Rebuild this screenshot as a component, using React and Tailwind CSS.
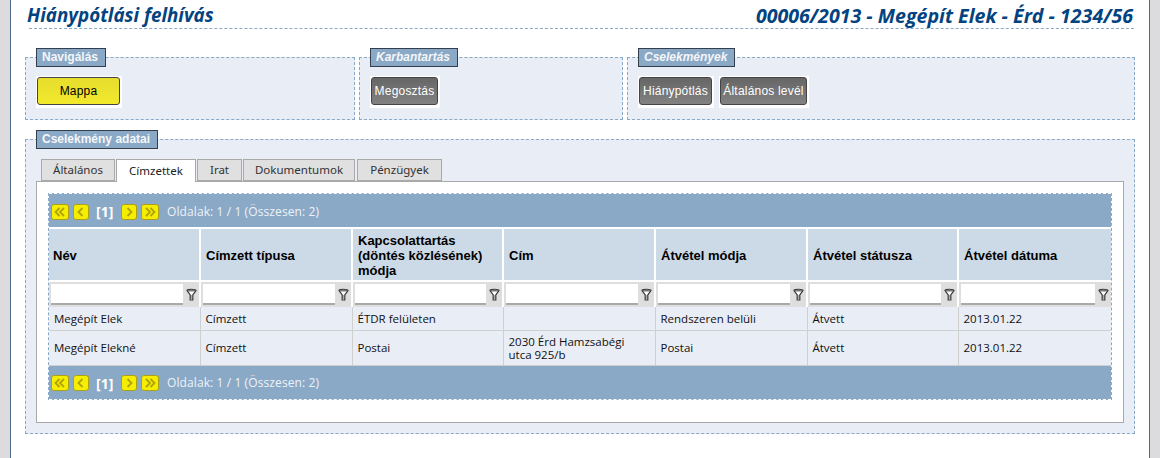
const Legend = ({ children, italic }) => (
  <div className={`absolute left-[10px] top-[-10px] h-[19px] border border-[#333f4c] bg-[#8aa9c7] pl-[5px] pr-[7px] text-[12px] font-bold leading-[16px] text-[#f4f6f9] ${italic ? "italic" : ""}`} style={{ fontFamily: '"Liberation Sans", sans-serif' }}>
    {children}
  </div>
);

const Btn = ({ children, yellow, w }) => (
  <div className="bg-white p-px pb-[3px] pr-[2px]">
    <div className={`flex h-[28px] items-center justify-center rounded-[3px] border border-[#444] text-[12px] tracking-[0.2px] ${w} ${yellow ? "bg-gradient-to-b from-[#e6dd2e] to-[#f2e92c] text-black" : "bg-gradient-to-b from-[#666] to-[#828282] text-white"}`} style={{ fontFamily: '"Liberation Sans", sans-serif' }}>
      {children}
    </div>
  </div>
);

const Panel = ({ title, italic, className, children }) => (
  <div className={`relative h-[63px] border border-dashed border-[#8aa9c7] bg-[#e9edf5] ${className}`}>
    <Legend italic={italic}>{title}</Legend>
    <div className="flex gap-[5px] pl-[10px] pt-[18px]">{children}</div>
  </div>
);

const Chev = ({ dbl, left }) => (
  <svg width="12" height="10" viewBox="0 0 12 10" fill="none" stroke="#b0a30a" strokeWidth="1.8">
    <g transform={left ? "" : "translate(12,0) scale(-1,1)"}>
      {dbl ? (
        <>
          <path d="M5.5 1 L1.5 5 L5.5 9" />
          <path d="M10 1 L6 5 L10 9" />
        </>
      ) : (
        <path d="M7.5 1 L3.5 5 L7.5 9" />
      )}
    </g>
  </svg>
);

const PgBtn = ({ dbl, left }) => (
  <div className={`flex h-[16px] items-center justify-center rounded-[3px] border border-[#ada11a] bg-[#f6ee00] ${dbl ? "w-[18px]" : "w-[16px]"}`}>
    <Chev dbl={dbl} left={left} />
  </div>
);

const Pager = ({ className }) => (
  <div className={`flex h-[34px] items-center border-dashed border-white bg-[#8aa9c7] pl-[2px] pt-[2px] text-[12px] tracking-[0.1px] text-[#eef2f7] ${className}`}>
    <PgBtn dbl left />
    <div className="ml-[4px]"><PgBtn left /></div>
    <span className="ml-[7px] w-[22px] text-[14px] font-bold text-white">[1]</span>
    <div className="ml-[3px]"><PgBtn /></div>
    <div className="ml-[4px]"><PgBtn dbl /></div>
    <span className="ml-[8px]">Oldalak: 1 / 1 (Összesen: 2)</span>
  </div>
);

const Funnel = () => (
  <svg width="11" height="14" viewBox="0 0 11 14" fill="none">
    <path d="M1 2.5 C1 0.8 10 0.8 10 2.5 L6.8 7 L6.8 12 L4.2 12 L4.2 7 Z" fill="#fff" stroke="#333" strokeWidth="1.2" />
    <path d="M1.5 2.8 H9.5" stroke="#555" strokeWidth="1.2" />
    <path d="M5.5 7 V12" stroke="#aaa" strokeWidth="1" />
  </svg>
);

const cols = [151, 152, 151, 152, 152, 151, 153];
const heads = ["Név", "Címzett típusa", "Kapcsolattartás (döntés közlésének) módja", "Cím", "Átvétel módja", "Átvétel státusza", "Átvétel dátuma"];
const rows = [
  ["Megépít Elek", "Címzett", "ÉTDR felületen", "", "Rendszeren belüli", "Átvett", "2013.01.22"],
  ["Megépít Elekné", "Címzett", "Postai", "2030 Érd Hamzsabégi utca 925/b", "Postai", "Átvett", "2013.01.22"],
];

const tabs = [
  ["Általános", "w-[74px]", false],
  ["Címzettek", "w-[80px]", true],
  ["Irat", "w-[45px]", false],
  ["Dokumentumok", "w-[112px]", false],
  ["Pénzügyek", "ml-px w-[85px]", false],
];

export default function App() {
  return (
    <div className="h-[458px] w-[1160px] overflow-hidden bg-[#dcdbdd]" style={{ fontFamily: '"Open Sans", "Liberation Sans", sans-serif' }}>
      <div className="mx-[10px] h-[458px] w-[1140px] border-x border-[#4f6b8c] bg-white pl-[14px] pr-[14px]">
        <div className="ml-[4px] mr-[1px] flex h-[29px] items-center justify-between border-b border-dashed border-[#8aa9c7] pt-[3px] font-bold italic text-[#03437f]">
          <span className="-ml-[2px] text-[18.8px]">Hiánypótlási felhívás</span>
          <span className="mr-[1px] text-[19.6px]">00006/2013 - Megépít Elek - Érd - 1234/56</span>
        </div>

        <div className="mt-[28px] flex gap-[4px]">
          <Panel title="Navigálás" className="w-[330px]">
            <Btn yellow w="w-[83px]">Mappa</Btn>
          </Panel>
          <Panel title="Karbantartás" italic className="w-[264px]">
            <Btn w="w-[67px]">Megosztás</Btn>
          </Panel>
          <Panel title="Cselekmények" italic className="w-[508px]">
            <Btn w="w-[73px]">Hiánypótlás</Btn>
            <Btn w="w-[87px]">Általános levél</Btn>
          </Panel>
        </div>

        <div className="relative mt-[19px] h-[295px] w-[1110px] border border-dashed border-[#8aa9c7] bg-[#e9edf5] px-[10px] pt-[19px]">
          <Legend>Cselekmény adatai</Legend>
          <div className="relative z-10 ml-[5px] flex h-[23px] items-start gap-px">
            {tabs.map(([t, w, active]) => (
              <div key={t} className={`flex items-center justify-center border border-[#a9a9a9] text-[11.5px] ${w} ${active ? "h-[23px] border-b-0 bg-white text-[#222]" : "h-[22px] bg-[#e0e0e0] text-[#333]"}`} style={{ fontFamily: '"Noto Sans", sans-serif' }}>
                {t}
              </div>
            ))}
          </div>
          <div className="-mt-px h-[242px] w-[1088px] border border-[#a9a9a9] bg-white px-[11px] pt-[11px]">
            <div className="w-[1064px] border-x border-dashed border-[#8aa9c7]">
              <Pager className="border-t" />
              <table className="w-full table-fixed border-collapse text-[11.5px] text-[#111]">
                <colgroup>
                  {cols.map((w, i) => <col key={i} style={{ width: w }} />)}
                </colgroup>
                <thead>
                  <tr className="h-[53px] border-y-2 border-white">
                    {heads.map((h, i) => (
                      <th key={i} className="border-r-2 border-white bg-[#ccd9e6] pl-[5px] pr-[4px] pt-px text-left text-[13px] font-bold leading-[15px] text-black first:pl-[4px] last:border-r-0" style={{ fontFamily: '"Liberation Sans", sans-serif' }}>
                        {h}
                      </th>
                    ))}
                  </tr>
                  <tr className="h-[26px]">
                    {heads.map((h, i) => (
                      <td key={i} className="border-r-2 border-white bg-[#dedede] py-0 pl-[2px] last:border-r-0">
                        <div className="flex items-center">
                          <div className="h-[21px] flex-1 border-b-2 border-[#aaa] bg-white" />
                          <div className="flex w-[16px] justify-center"><Funnel /></div>
                        </div>
                      </td>
                    ))}
                  </tr>
                </thead>
                <tbody>
                  {rows.map((r, ri) => (
                    <tr key={ri} className={`border-b border-[#cfcfcf] bg-[#e9edf5] ${ri ? "h-[35px]" : "h-[23px]"}`}>
                      {r.map((c, i) => (
                        <td key={i} className="border-r border-[#cfcfcf] px-[5px] py-0 leading-[13px] last:border-r-0">{c}</td>
                      ))}
                    </tr>
                  ))}
                </tbody>
              </table>
              <Pager className="border-b" />
            </div>
          </div>
        </div>
      </div>
    </div>
  );
}
